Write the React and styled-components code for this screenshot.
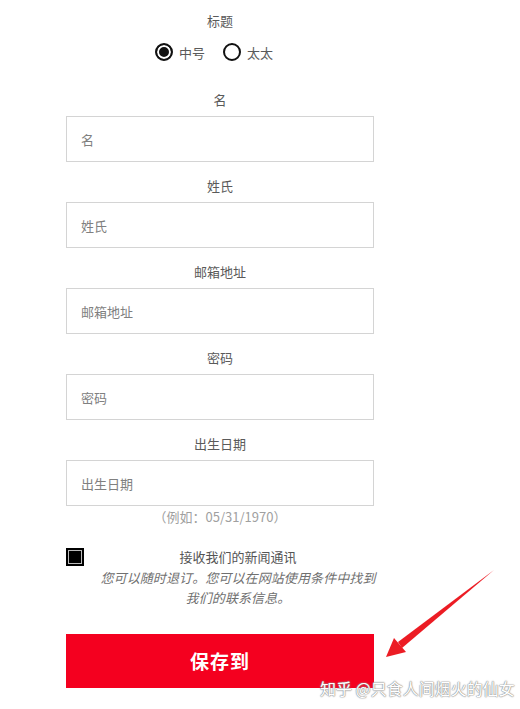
import React from 'react'
import styled, { createGlobalStyle } from 'styled-components'

const Global = createGlobalStyle`
  html, body {
    margin: 0;
    padding: 0;
    background: #ffffff;
  }
  body {
    font-family: 'Noto Sans CJK SC', 'Liberation Sans', sans-serif;
    color: #555;
  }
`

const Page = styled.div`
  position: relative;
  width: 520px;
  height: 709px;
  overflow: hidden;
`

const Form = styled.div`
  width: 308px;
  margin-left: 66px;
  padding-top: 11px;
  display: flex;
  flex-direction: column;
`

const Label = styled.div`
  height: 20px;
  line-height: 20px;
  font-size: 13px;
  color: #5a5a5a;
  text-align: center;
  margin-bottom: ${p => p.$mb ?? 6}px;
`

const RadioRow = styled.div`
  display: flex;
  justify-content: center;
  align-items: center;
  gap: 18px;
  height: 20px;
  margin: 11px 0 28px;
  padding-right: 12px;
`

const RadioItem = styled.label`
  display: flex;
  align-items: center;
  gap: 6px;
  font-size: 13px;
  color: #5a5a5a;
`

const Dot = styled.span`
  box-sizing: border-box;
  width: 18px;
  height: 18px;
  border-radius: 50%;
  border: 2px solid #111;
  background: ${p => (p.$on ? '#111' : '#fff')};
  box-shadow: ${p => (p.$on ? 'inset 0 0 0 2px #fff' : 'none')};
`

const Field = styled.div`
  display: flex;
  flex-direction: column;
  margin-bottom: 14px;
`

const Input = styled.div`
  box-sizing: border-box;
  height: 46px;
  border: 1px solid #d4d4d4;
  padding: 0 14px;
  display: flex;
  align-items: center;
  font-size: 13px;
  color: #808080;
`

const Hint = styled.div`
  margin-top: -13px;
  height: 20px;
  line-height: 20px;
  font-size: 13px;
  color: #a0a0a0;
  text-align: center;
`

const OptRow = styled.div`
  display: flex;
  align-items: flex-start;
  margin-top: 20px;
`

const Check = styled.span`
  box-sizing: border-box;
  flex: none;
  width: 18px;
  height: 18px;
  margin-top: 1px;
  background: #000;
  border: 2px solid #000;
  box-shadow: inset 0 0 0 1px #bbb;
`

const OptText = styled.div`
  flex: 1;
  margin-left: 14px;
  margin-right: -4px;
  text-align: center;
  font-size: 13px;
  line-height: 20.5px;
`

const OptTitle = styled.div`
  color: #555;
  white-space: nowrap;
`

const OptNote = styled.div`
  color: #707070;
  font-style: italic;
  letter-spacing: 0.1px;
  white-space: nowrap;
`

const SaveButton = styled.button`
  margin-top: 25px;
  height: 54px;
  border: none;
  background: #f4001f;
  color: #fff;
  font-family: 'Noto Sans CJK SC', sans-serif;
  font-size: 19px;
  font-weight: 700;
  letter-spacing: 1px;
`

const Watermark = styled.div`
  position: absolute;
  left: 320px;
  top: 676px;
  font-size: 16px;
  color: #fff;
  white-space: nowrap;
  text-shadow: 0 0 1px #888, 0 0 1px #888, 0 0 2px #aaa;
`

const Arrow = styled.svg`
  position: absolute;
  left: 0;
  top: 0;
  pointer-events: none;
`

const fields = ['名', '姓氏', '邮箱地址', '密码', '出生日期']

export default function App() {
  return (
    <Page>
      <Global />
      <Form>
        <Label $mb={0}>标题</Label>
        <RadioRow>
          <RadioItem><Dot $on />中号</RadioItem>
          <RadioItem><Dot />太太</RadioItem>
        </RadioRow>
        {fields.map(f => (
          <Field key={f}>
            <Label>{f}</Label>
            <Input>{f}</Input>
          </Field>
        ))}
        <Hint>（例如：05/31/1970）</Hint>
        <OptRow>
          <Check />
          <OptText>
            <OptTitle>接收我们的新闻通讯</OptTitle>
            <OptNote>您可以随时退订。您可以在网站使用条件中找到</OptNote>
            <OptNote>我们的联系信息。</OptNote>
          </OptText>
        </OptRow>
        <SaveButton>保存到</SaveButton>
      </Form>
      <Arrow width="520" height="709" viewBox="0 0 520 709">
        <polygon points="494,570 402,648 398,642" fill="#ec1c24" />
        <polygon points="386,657 394,638 406,652" fill="#ec1c24" />
      </Arrow>
      <Watermark>知乎 @只食人间烟火的仙女</Watermark>
    </Page>
  )
}
